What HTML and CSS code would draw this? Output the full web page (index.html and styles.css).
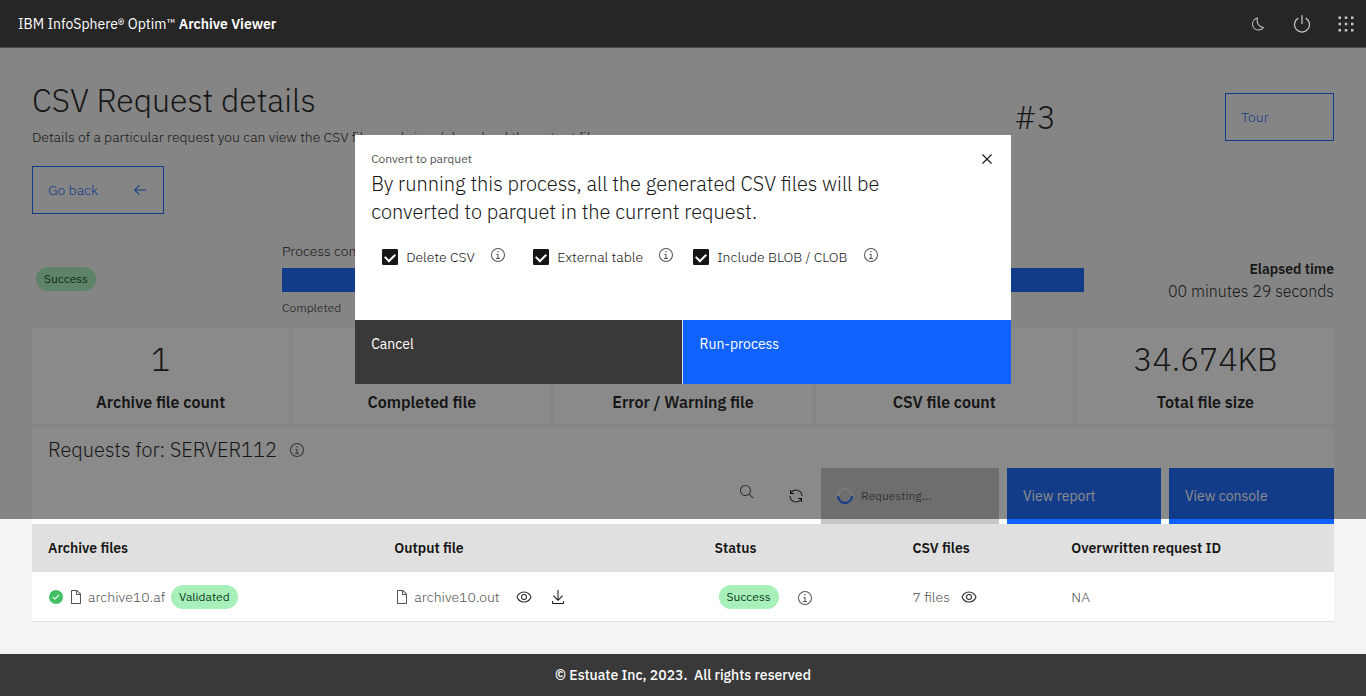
FILE: index.html
```html
<!DOCTYPE html>
<html lang="en">
<head>
<meta charset="utf-8">
<title>Archive Viewer</title>
<link rel="stylesheet" href="styles.css">
</head>
<body>
<svg class="sprite" aria-hidden="true">
  <symbol id="info" viewBox="0 0 32 32"><path d="M17 22V14H13v2h2v6H12v2h8V22ZM16,8a1.5,1.5,0,1,0,1.5,1.5A1.5,1.5,0,0,0,16,8Z"/><path d="M16,30A14,14,0,1,1,30,16,14,14,0,0,1,16,30ZM16,4A12,12,0,1,0,28,16,12,12,0,0,0,16,4Z"/></symbol>
  <symbol id="moon" viewBox="0 0 32 32"><path d="M13.5,5.41A15.08,15.08,0,0,0,25.1,23.61a11.11,11.11,0,0,1-7.97,3.39c-.14,0-.28,0-.42,0A11.09,11.09,0,0,1,13.5,5.41M14.98,3a1,1,0,0,0-.17.02A13.1,13.1,0,0,0,16.63,29c.16,0,.33,0,.49,0a13.07,13.07,0,0,0,10.7-5.56,1,1,0,0,0-.78-1.56A13.08,13.08,0,0,1,15.89,4.38,1.01,1.01,0,0,0,14.98,3Z"/></symbol>
  <symbol id="power" viewBox="0 0 32 32"><path d="M22.5,5.74l-1,1.73a11,11,0,1,1-11,0l-1-1.73a13,13,0,1,0,13,0ZM15 2h2v14h-2Z"/></symbol>
  <symbol id="apps" viewBox="0 0 32 32"><path d="M4 4h4v4H4ZM14 4h4v4h-4ZM24 4h4v4h-4ZM4 14h4v4H4ZM14 14h4v4h-4ZM24 14h4v4h-4ZM4 24h4v4H4ZM14 24h4v4h-4ZM24 24h4v4h-4Z"/></symbol>
  <symbol id="eye" viewBox="0 0 32 32"><path d="M30.94,15.66A16.69,16.69,0,0,0,16,5,16.69,16.69,0,0,0,1.06,15.66a1,1,0,0,0,0,.68A16.69,16.69,0,0,0,16,27,16.69,16.69,0,0,0,30.94,16.34,1,1,0,0,0,30.94,15.66ZM16,25c-5.3,0-10.9-3.93-12.93-9C5.1,10.93,10.7,7,16,7s10.9,3.93,12.93,9C26.9,21.07,21.3,25,16,25Z"/><path d="M16,10a6,6,0,1,0,6,6A6,6,0,0,0,16,10Zm0,10a4,4,0,1,1,4-4A4,4,0,0,1,16,20Z"/></symbol>
  <symbol id="doc" viewBox="0 0 32 32"><path d="M25.7,9.3l-7-7C18.5,2.1,18.3,2,18,2H8C6.9,2,6,2.9,6,4v24c0,1.1,.9,2,2,2h16c1.1,0,2-.9,2-2V10C26,9.7,25.9,9.5,25.7,9.3z M18,4.4l5.6,5.6H18V4.4z M24,28H8V4h8v6c0,1.1,.9,2,2,2h6V28z"/></symbol>
  <symbol id="download" viewBox="0 0 32 32"><path d="M26,24v4H6V24H4v4a2,2,0,0,0,2,2H26a2,2,0,0,0,2-2V24ZM26 14 24.59 12.59 17 20.17V2H15V20.17L7.41 12.59 6 14 16 24Z"/></symbol>
  <symbol id="renew" viewBox="0 0 32 32"><path d="M12,10H6.78A11,11,0,0,1,27,16h2A13,13,0,0,0,6,7.68V4H4v8h8ZM20,22h5.22A11,11,0,0,1,5,16H3a13,13,0,0,0,23,8.32V28h2V20H20Z"/></symbol>
  <symbol id="search" viewBox="0 0 32 32"><path d="M29,27.59l-7.55-7.55a11.02,11.02,0,1,0-1.41,1.41L27.59,29ZM4,13a9,9,0,1,1,9,9A9.01,9.01,0,0,1,4,13Z"/></symbol>
  <symbol id="close" viewBox="0 0 32 32"><path d="M24 9.4 22.6 8 16 14.6 9.4 8 8 9.4 14.6 16 8 22.6 9.4 24 16 17.4 22.6 24 24 22.6 17.4 16Z"/></symbol>
  <symbol id="arrow-left" viewBox="0 0 32 32"><path d="M14 26 15.41 24.59 7.83 17H28V15H7.83L15.41 7.41 14 6 4 16Z"/></symbol>
  <symbol id="check" viewBox="0 0 32 32"><path d="M16,2A14,14,0,1,0,30,16,14,14,0,0,0,16,2ZM14,21.59l-5-5L10.59,15,14,18.41,21.41,11l1.6,1.59Z"/></symbol>
</svg>

<header class="topbar">
  <a class="brand" href="#">IBM InfoSphere® Optim™ <strong>Archive Viewer</strong></a>
  <nav class="topbar-actions">
    <button class="icon-button" aria-label="Dark mode"><svg class="icon"><use href="#moon"/></svg></button>
    <button class="icon-button" aria-label="Log out"><svg class="icon icon-lg"><use href="#power"/></svg></button>
    <button class="icon-button" aria-label="Switch application"><svg class="icon icon-lg"><use href="#apps"/></svg></button>
  </nav>
</header>

<main class="page">
  <section class="page-head">
    <div>
      <h1 class="title">CSV Request details</h1>
      <p class="description">Details of a particular request you can view the CSV files and view / download the output file.</p>
      <button class="button button-outline back">Go back <svg class="icon"><use href="#arrow-left"/></svg></button>
    </div>
    <div class="request-number">#3</div>
    <button class="button button-outline tour">Tour</button>
  </section>

  <section class="status">
    <div class="status-tag"><span class="tag">Success</span></div>
    <div class="progress-block">
      <label for="process">Process completed</label>
      <progress id="process" class="progress" value="100" max="100"></progress>
      <span class="helper">Completed</span>
    </div>
    <div class="elapsed"><strong>Elapsed time</strong><span>00 minutes 29 seconds</span></div>
  </section>

  <section class="tiles">
    <div class="tile"><span class="figure">1</span><span class="caption">Archive file count</span></div>
    <div class="tile"><span class="figure">1</span><span class="caption">Completed file</span></div>
    <div class="tile"><span class="figure">0</span><span class="caption">Error / Warning file</span></div>
    <div class="tile"><span class="figure">7</span><span class="caption">CSV file count</span></div>
    <div class="tile"><span class="figure">34.674KB</span><span class="caption">Total file size</span></div>
  </section>

  <section class="requests">
    <h2 class="requests-title">Requests for: SERVER112 <svg class="icon"><use href="#info"/></svg></h2>
    <div class="toolbar">
      <button class="icon-button search-button" aria-label="Search"><svg class="icon"><use href="#search"/></svg></button>
      <button class="icon-button renew-button" aria-label="Refresh"><svg class="icon"><use href="#renew"/></svg></button>
      <button class="button button-busy" disabled><span class="spinner"></span>Requesting...</button>
      <button class="button button-primary report">View report</button>
      <button class="button button-primary console">View console</button>
    </div>
    <table class="table">
      <colgroup><col class="col-archive"><col class="col-output"><col class="col-status"><col class="col-csv"><col></colgroup>
      <thead>
        <tr><th>Archive files</th><th>Output file</th><th>Status</th><th>CSV files</th><th>Overwritten request ID</th></tr>
      </thead>
      <tbody>
        <tr>
          <td><div class="cell"><svg class="icon ok"><use href="#check"/></svg><svg class="icon doc"><use href="#doc"/></svg><span>archive10.af</span><span class="tag">Validated</span></div></td>
          <td><div class="cell"><svg class="icon"><use href="#doc"/></svg><span>archive10.out</span><button class="icon-button view" aria-label="View output"><svg class="icon"><use href="#eye"/></svg></button><button class="icon-button get" aria-label="Download output"><svg class="icon"><use href="#download"/></svg></button></div></td>
          <td><div class="cell"><span class="tag row-status">Success</span><svg class="icon row-info"><use href="#info"/></svg></div></td>
          <td><div class="cell"><span>7 files</span><button class="icon-button csv-view" aria-label="View CSV files"><svg class="icon"><use href="#eye"/></svg></button></div></td>
          <td>NA</td>
        </tr>
      </tbody>
    </table>
  </section>
</main>

<footer class="footer">© Estuate Inc, 2023.&nbsp; All rights reserved</footer>

<div class="overlay">
  <div class="modal" role="dialog" aria-modal="true" aria-labelledby="modal-title">
    <div class="modal-body">
      <div class="modal-top">
        <p class="modal-label">Convert to parquet</p>
        <button class="icon-button modal-close" aria-label="Close"><svg class="icon icon-lg"><use href="#close"/></svg></button>
      </div>
      <h2 id="modal-title" class="modal-title">By running this process, all the generated CSV files will be converted to parquet in the current request.</h2>
      <div class="options">
        <div class="option"><label><input type="checkbox" class="checkbox" checked>Delete CSV</label><svg class="icon"><use href="#info"/></svg></div>
        <div class="option"><label><input type="checkbox" class="checkbox" checked>External table</label><svg class="icon"><use href="#info"/></svg></div>
        <div class="option"><label><input type="checkbox" class="checkbox" checked>Include BLOB / CLOB</label><svg class="icon"><use href="#info"/></svg></div>
      </div>
    </div>
    <div class="modal-actions">
      <button class="modal-button cancel">Cancel</button>
      <button class="modal-button run">Run-process</button>
    </div>
  </div>
</div>
</body>
</html>
```
FILE: styles.css
```css
* { box-sizing: border-box; margin: 0; padding: 0; }

body {
  display: flex;
  flex-direction: column;
  min-height: 100vh;
  background: #f4f4f4;
  color: #161616;
  font-family: "IBM Plex Sans", Inter, "Open Sans", sans-serif;
  font-size: 14px;
  font-weight: 300;
  line-height: 20px;
}

button, input { font: inherit; color: inherit; }
button { border: 0; background: none; cursor: pointer; }
.sprite { display: none; }
.icon { width: 16px; height: 16px; fill: currentColor; flex: none; }
.icon-lg { width: 20px; height: 20px; }
.icon-button { display: inline-flex; align-items: center; justify-content: center; }

/* Top bar */
.topbar {
  position: relative;
  z-index: 2;
  display: flex;
  align-items: center;
  justify-content: space-between;
  height: 48px;
  padding-left: 18px;
  background: #262626;
  border-bottom: 1px solid #4c4c4c;
}
.brand { color: #fff; text-decoration: none; font-weight: 400; }
.brand strong { font-weight: 600; }
.topbar-actions { display: flex; color: #c6c6c6; }
.topbar-actions .icon-button { width: 44px; height: 47px; }
.topbar-actions { margin-right: -2px; }

.page { flex: 1; padding: 32px 32px 0; }

.page-head { display: grid; grid-template-columns: 1fr auto auto; column-gap: 169px; align-items: start; }
.title { font-size: 32px; font-weight: 300; line-height: 40px; }
.description { margin-top: 7px; white-space: nowrap; width: 0; }
.request-number { margin-top: 17px; font-size: 32px; line-height: 40px; }

.button { display: flex; align-items: center; height: 48px; padding: 0 16px; }
.button-outline { border: 1px solid #0f62fe; padding: 0 15px; color: #0f62fe; justify-content: space-between; }
.back { width: 132px; margin-top: 19px; }
.tour { width: 109px; margin-top: 13px; }

/* Process state */
.status { display: grid; grid-template-columns: 250px 1fr 250px; margin-top: 27px; }
.status-tag { padding: 26px 4px 0; }
.tag {
  display: inline-block;
  padding: 0 8px;
  border-radius: 12px;
  background: #a7f0ba;
  color: #0e3a1c;
  font-size: 12px;
  font-weight: 400;
  line-height: 24px;
}
.progress-block { display: flex; flex-direction: column; }
.progress { appearance: none; width: 100%; height: 24px; margin: 7px 0; border: 0; background: #e0e0e0; }
.progress::-webkit-progress-bar { background: #e0e0e0; }
.progress::-webkit-progress-value { background: #0f62fe; }
.helper { font-size: 12px; line-height: 18px; color: #525252; font-weight: 400; }
.elapsed { display: flex; flex-direction: column; align-items: flex-end; padding-top: 17px; font-size: 16px; line-height: 22px; }
.elapsed strong { font-size: 14px; font-weight: 600; }

/* Summary tiles */
.tiles { display: grid; grid-template-columns: repeat(5, 1fr); gap: 4px; margin-top: 11px; }
.tile { display: flex; flex-direction: column; align-items: center; height: 96px; padding-top: 11px; background: #fff; }
.figure { font-size: 32px; line-height: 40px; }
.caption { margin-top: 12px; font-size: 16px; font-weight: 600; line-height: 22px; }

/* Requests table */
.requests { margin-top: 4px; background: #fff; }
.requests-title { display: flex; align-items: center; gap: 12px; height: 40px; padding: 4px 16px 0; font-size: 20px; font-weight: 300; }
.requests-title .icon { color: #525252; }
.toolbar { display: flex; justify-content: flex-end; gap: 8px; }
.toolbar .button { height: 56px; }
.search-button { width: 48px; height: 48px; color: #525252; }
.renew-button { width: 34px; height: 56px; }
.button-primary { background: #0f62fe; color: #fff; font-weight: 400; }
.report { width: 154px; }
.console { width: 165px; }
.button-busy { width: 178px; gap: 8px; background: #c6c6c6; color: #525252; font-size: 12px; font-weight: 400; }
.spinner { width: 16px; height: 16px; border: 2px solid #e0e0e0; border-right-color: #0f62fe; border-bottom-color: #0f62fe; border-radius: 50%; transform: rotate(45deg); }

.table { width: 100%; border-collapse: collapse; table-layout: fixed; }
.col-archive { width: 26.6%; }
.col-output { width: 24.6%; }
.col-status { width: 15.2%; }
.col-csv { width: 12.2%; }
.table th { height: 48px; padding: 0 16px; background: #e0e0e0; text-align: left; font-weight: 600; }
.table td { height: 49px; padding: 2px 16px 0; border-bottom: 1px solid #e0e0e0; color: #525252; }
.cell { display: flex; align-items: center; }
.ok { color: #42be65; margin-right: 4px; }
.cell .doc + span { margin-right: 6px; }
.cell .icon + span { margin-left: 4px; }
.view { margin-left: 16px; color: #262626; }
.get { margin-left: 18px; color: #161616; }
.row-status { margin-left: 4px; }
.row-info { margin: 2px 0 0 18px; }
.csv-view { margin-left: 11px; color: #262626; }

.footer { height: 42px; background: #393939; color: #fff; text-align: center; font-weight: 500; line-height: 42px; }

/* Dialog */
.overlay {
  position: fixed;
  inset: 0 0 177px;
  z-index: 1;
  display: flex;
  align-items: center;
  justify-content: center;
  background: rgba(22, 22, 22, 0.5);
}
.modal { width: 48%; background: #fff; }
.modal-body { padding: 0 0 51px 16px; }
.modal-top { display: flex; justify-content: space-between; height: 35px; }
.modal-label { padding-top: 15px; font-size: 12px; line-height: 18px; font-weight: 400; color: #525252; }
.modal-close { width: 48px; height: 48px; }
.modal-title { max-width: 540px; font-size: 20px; font-weight: 300; line-height: 28px; }
.options { display: grid; grid-template-columns: 151px 160px auto; padding: 19px 0 0 11px; }
.option { display: flex; gap: 15px; color: #525252; }
.option label { display: flex; align-items: center; gap: 8px; height: 24px; color: #161616; }
.option .icon { margin-top: 2px; }
.checkbox { appearance: none; display: grid; place-items: center; width: 16px; height: 16px; border: 1px solid #161616; border-radius: 1px; }
.checkbox:checked { background: #161616; }
.checkbox:checked::after { content: ""; width: 8px; height: 5px; margin-bottom: 2px; border: solid #fff; border-width: 0 0 2px 2px; transform: rotate(-45deg); }
.modal-actions { display: grid; grid-template-columns: 1fr 1fr; gap: 1px; background: #e0e0e0; }
.modal-button { height: 64px; padding: 14px 16px; color: #fff; font-weight: 400; text-align: left; display: flex; align-items: flex-start; }
.cancel { background: #393939; }
.run { background: #0f62fe; }
```
